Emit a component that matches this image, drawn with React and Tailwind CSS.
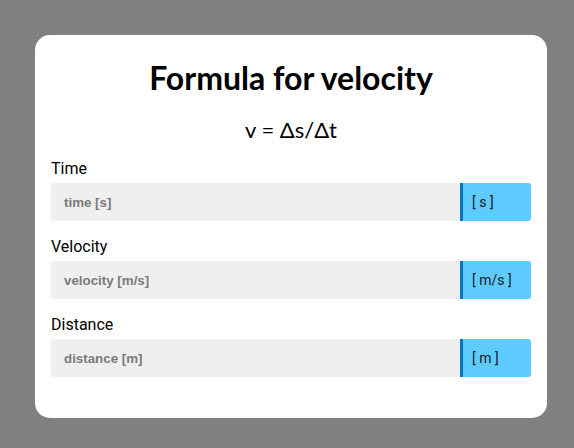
import React from 'react';

const fields = [
    { label: 'Time', placeholder: 'time [s]', unit: '[ s ]' },
    { label: 'Velocity', placeholder: 'velocity [m/s]', unit: '[ m/s ]' },
    { label: 'Distance', placeholder: 'distance [m]', unit: '[ m ]' },
];

const Field = ({ label, placeholder, unit }) => (
    <div className="flex flex-col">
        <label className="text-[16px] leading-[20px] text-black font-['Roboto',sans-serif] mb-[4px]">{label}</label>
        <div className="flex h-[38px]">
            <input
                type="text"
                placeholder={placeholder}
                className="flex-1 min-w-0 h-full bg-[#efefef] rounded-l-[3px] pl-[13px] text-[13.33px] font-bold font-['Liberation_Sans',Arial,sans-serif] placeholder:text-[#7a7a7a] outline-none"
            />
            <div className="w-[71px] h-full bg-[#5ecbff] border-l-[3px] border-[#0678c3] rounded-r-[3px] flex items-center pl-[9px] text-[14px] text-[#1a1a1a] font-['Roboto',sans-serif]">
                {unit}
            </div>
        </div>
    </div>
);

export default function App() {
    return (
        <div className="w-[574px] h-[448px] bg-[#808080] pt-[35px] pl-[35px]">
            <div className="w-[512px] h-[383px] bg-white rounded-[15px] px-[16px] pt-[23px]">
                <h1 className="text-center text-[32px] leading-[40px] font-bold text-black font-['Lato',sans-serif]">Formula for velocity</h1>
                <p className="text-center text-[22px] leading-[28px] text-black font-['Lato',sans-serif] mt-[18px]">v = Δs/Δt</p>
                <div className="flex flex-col gap-[16px] mt-[15px]">
                    {fields.map((f) => (
                        <Field key={f.label} {...f} />
                    ))}
                </div>
            </div>
        </div>
    );
}
